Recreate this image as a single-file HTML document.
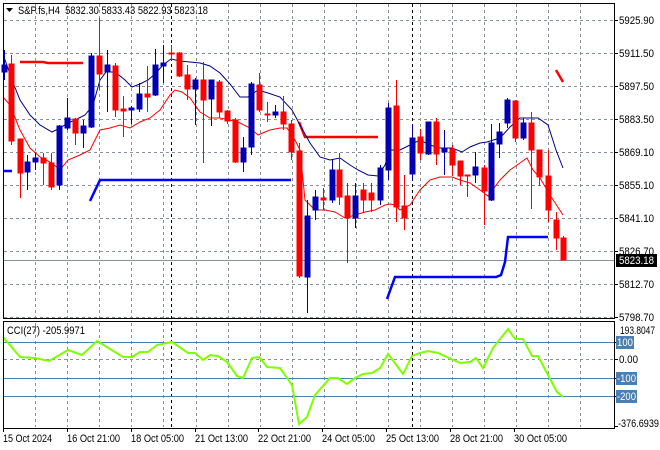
<!DOCTYPE html>
<html><head><meta charset="utf-8"><style>
body{margin:0;background:#fff;width:660px;height:450px;overflow:hidden}
svg{display:block}
text{font-family:"Liberation Sans",sans-serif;font-size:11px;fill:#000}
</style></head><body>
<svg width="660" height="450" viewBox="0 0 660 450" xmlns="http://www.w3.org/2000/svg">
<rect width="660" height="450" fill="#fff"/>
<g stroke="#8a9097" stroke-dasharray="3,3" stroke-width="1">
<path d="M4 20.5H614M4 53.5H614M4 86.5H614M4 119.5H614M4 152.5H614M4 185.5H614M4 218.5H614M4 251.5H614M4 284.5H614M4 317.5H614"/>
<path d="M35.5 4V318M67.5 4V318M99.5 4V318M131.5 4V318M163.5 4V318M196.5 4V318M228.5 4V318M260.5 4V318M292.5 4V318M324.5 4V318M356.5 4V318M388.5 4V318M420.5 4V318M452.5 4V318M484.5 4V318M516.5 4V318M548.5 4V318M580.5 4V318"/>
<path d="M35.5 323V427M67.5 323V427M99.5 323V427M131.5 323V427M163.5 323V427M196.5 323V427M228.5 323V427M260.5 323V427M292.5 323V427M324.5 323V427M356.5 323V427M388.5 323V427M420.5 323V427M452.5 323V427M484.5 323V427M516.5 323V427M548.5 323V427M580.5 323V427M4 359.5H614"/>
</g>
<g stroke="#000" stroke-dasharray="3,3"><path d="M171.5 4V428M412.5 4V428"/></g>
<path d="M4 260.5H614" stroke="#8a9097"/>
<g stroke="#4a7fb0"><path d="M4 342.5H614M4 378.5H614M4 396.5H614"/></g>
<g fill="none" stroke-width="2.5">
<path d="M20 62H43L48 63H83" stroke="#f00"/>
<path d="M299 122L305 137H378" stroke="#f00"/>
<path d="M556 70L563 82" stroke="#f00"/>
<path d="M3 171H12" stroke="#00f"/>
<path d="M90 201L100 180H291" stroke="#00f"/>
<path d="M387 299L395 277H496L501 275L505 262L508 237H548" stroke="#00f"/>
</g>
<polyline fill="none" stroke="#000080" stroke-width="1" points="4,57 12,80 20,100 30,115 40,125 52,132 60,128 68,123 75,120 85,115 93,105 100,80 106,72 115,72 125,80 132,87 140,84 148,80 155,74 163,65 171,59 180,61 190,62 200,63 210,66 220,73 230,84 240,97 248,97 258,90 268,93 280,97 292,110 300,125 310,143 320,157 330,160 340,158 350,165 358,170 368,175 378,176 385,165 390,150 400,150 410,145 420,140 430,145 440,148 452,148 462,152 470,147 480,143 487,142 500,138 510,127 520,118 530,118 538,118 548,125 556,150 563,168"/>
<polyline fill="none" stroke="#f00" stroke-width="1" points="3,97 10,105 20,130 30,148 40,157 52,163 60,170 68,160 80,155 90,150 100,130 110,128 120,125 130,128 140,122 150,118 160,110 170,95 175,90 182,92 190,98 200,112 210,118 220,118 230,120 240,123 250,128 258,135 265,132 270,130 280,128 287,128 295,140 300,150 305,200 315,210 325,210 335,212 345,218 355,215 365,212 375,210 385,205 390,204 395,205 400,210 410,205 420,190 430,180 440,177 452,177 460,180 470,183 480,190 488,196 500,180 510,170 520,163 527,158 533,170 540,178 550,195 563,215"/>
<g stroke="#0000b0" fill="#0000b0">
<path d="M4.5 50V80M27.5 155V190M35.5 153V170M59.5 125V190M67.5 98V130M83.5 120V148M91.5 53V128M107.5 50V112M131.5 106V124M139.5 83V112M155.5 49V96M163.5 45V83M195.5 78V125M211.5 80V126M243.5 137V172M251.5 82V155M275.5 105V118M307.5 200V313M315.5 190V220M332.5 159V203M355.5 183V228M380.5 165V205M388.5 103V180M412.5 124V181M428.5 122V155M444.5 130V175M475.5 152V183M491.5 124V201M499.5 123V158M507.5 98V128M523.5 118V140"/>
<rect x="2" y="65" width="5" height="7"/><rect x="25" y="162" width="5" height="10"/><rect x="33" y="158" width="5" height="4"/><rect x="57" y="126" width="5" height="59"/><rect x="65" y="118" width="5" height="10"/><rect x="81" y="126" width="5" height="7"/><rect x="89" y="56" width="5" height="71"/><rect x="105" y="65" width="5" height="7"/><rect x="129" y="108" width="5" height="2"/><rect x="137" y="94" width="5" height="15"/><rect x="153" y="65" width="5" height="30"/><rect x="161" y="63" width="5" height="3"/><rect x="193" y="80" width="5" height="9"/><rect x="209" y="80" width="5" height="19"/><rect x="241" y="148" width="5" height="14"/><rect x="249" y="84" width="5" height="63"/><rect x="273" y="112" width="5" height="3"/><rect x="305" y="216" width="5" height="61"/><rect x="313" y="197" width="5" height="13"/><rect x="330" y="170" width="5" height="30"/><rect x="353" y="196" width="5" height="22"/><rect x="378" y="168" width="5" height="32"/><rect x="386" y="108" width="5" height="62"/><rect x="410" y="138" width="5" height="36"/><rect x="426" y="122" width="5" height="32"/><rect x="442" y="148" width="5" height="4"/><rect x="473" y="167" width="5" height="8"/><rect x="489" y="143" width="5" height="57"/><rect x="497" y="132" width="5" height="12"/><rect x="505" y="100" width="5" height="23"/><rect x="521" y="123" width="5" height="15"/>
</g>
<g stroke="#f00" fill="#f00">
<path d="M11.5 55V145M20.5 139V198M43.5 153V185M51.5 153V190M75.5 118V145M99.5 18V90M115.5 63V117M123.5 96V137M147.5 66V112M171.5 45V60M179.5 52V77M187.5 65V100M203.5 62V163M219.5 80V118M227.5 110V124M235.5 118V163M259.5 73V112M267.5 102V122M283.5 96V130M291.5 120V160M299.5 143V278M323.5 188V210M339.5 153V205M347.5 183V263M363.5 183V213M371.5 183V212M396.5 80V222M404.5 175V230M420.5 129V160M436.5 118V165M452.5 145V176M460.5 161V185M467.5 175V197M484.5 165V225M515.5 100V142M531.5 112V209M539.5 150V186M548.5 150V222M556.5 212V250M563.5 236V260"/>
<rect x="9" y="64" width="5" height="77"/><rect x="18" y="139" width="5" height="34"/><rect x="41" y="158" width="5" height="5"/><rect x="49" y="163" width="5" height="24"/><rect x="73" y="119" width="5" height="14"/><rect x="97" y="56" width="5" height="18"/><rect x="113" y="66" width="5" height="44"/><rect x="121" y="109" width="5" height="2"/><rect x="145" y="94" width="5" height="3"/><rect x="169" y="53" width="5" height="1"/><rect x="177" y="53" width="5" height="23"/><rect x="185" y="75" width="5" height="14"/><rect x="201" y="80" width="5" height="20"/><rect x="217" y="82" width="5" height="30"/><rect x="225" y="111" width="5" height="10"/><rect x="233" y="120" width="5" height="42"/><rect x="257" y="85" width="5" height="25"/><rect x="265" y="114" width="5" height="1"/><rect x="281" y="112" width="5" height="12"/><rect x="289" y="124" width="5" height="28"/><rect x="297" y="151" width="5" height="125"/><rect x="321" y="198" width="5" height="2"/><rect x="337" y="170" width="5" height="27"/><rect x="345" y="196" width="5" height="22"/><rect x="361" y="190" width="5" height="10"/><rect x="369" y="193" width="5" height="7"/><rect x="394" y="106" width="5" height="101"/><rect x="402" y="206" width="5" height="12"/><rect x="418" y="137" width="5" height="16"/><rect x="434" y="122" width="5" height="32"/><rect x="450" y="149" width="5" height="16"/><rect x="458" y="161" width="5" height="15"/><rect x="465" y="175" width="5" height="1"/><rect x="482" y="168" width="5" height="23"/><rect x="513" y="101" width="5" height="37"/><rect x="529" y="123" width="5" height="27"/><rect x="537" y="150" width="5" height="27"/><rect x="546" y="176" width="5" height="34"/><rect x="554" y="220" width="5" height="18"/><rect x="561" y="238" width="5" height="22"/>
</g>
<polyline fill="none" stroke="#7fff00" stroke-width="2" points="3,337 20,357 35,358 49,361 68,350 82,355 97,341 123,357 132,357 140,352 148,352 157,345 172,342 188,353 195,353 203,360 210,355 218,356 227,362 237,376 243,378 252,358 259,357 267,367 280,368 292,385 299,424 307,417 315,395 330,378 338,378 347,384 355,378 363,374 372,373 380,368 388,354 403,374 412,356 420,353 428,351 438,353 460,363 470,362 476,358 483,368 493,348 508,329 515,339 523,339 532,356 538,356 548,375 557,392 563,397"/>
<g fill="none" stroke="#000"><rect x="3.5" y="3.5" width="611" height="315"/><rect x="3.5" y="321.5" width="611" height="107"/></g>
<g stroke="#000"><path d="M614 20.5h4M614 53.5h4M614 86.5h4M614 119.5h4M614 152.5h4M614 185.5h4M614 218.5h4M614 251.5h4M614 284.5h4M614 317.5h4M614 342.5h4M614 359.5h4M614 378.5h4M614 396.5h4M614 426.5h4M3.5 428v4M67.5 428v4M131.5 428v4M195.5 428v4M258.5 428v4M322.5 428v4M386.5 428v4M450.5 428v4M514.5 428v4"/></g>
<path d="M6 8h7l-3.5 4z" fill="#000"/>
<text x="18" y="14" textLength="190" lengthAdjust="spacingAndGlyphs">S&amp;P.fs,H4&#160;&#160;5832.30 5833.43 5822.93 5823.18</text>
<text x="7" y="334" textLength="78" lengthAdjust="spacingAndGlyphs">CCI(27) -205.9971</text>
<g>
<text x="619" y="24" textLength="35" lengthAdjust="spacingAndGlyphs">5925.90</text><text x="619" y="57" textLength="35" lengthAdjust="spacingAndGlyphs">5911.50</text><text x="619" y="90" textLength="35" lengthAdjust="spacingAndGlyphs">5897.50</text><text x="619" y="123" textLength="35" lengthAdjust="spacingAndGlyphs">5883.50</text><text x="619" y="156" textLength="35" lengthAdjust="spacingAndGlyphs">5869.10</text><text x="619" y="189" textLength="35" lengthAdjust="spacingAndGlyphs">5855.10</text><text x="619" y="222" textLength="35" lengthAdjust="spacingAndGlyphs">5841.10</text><text x="619" y="255" textLength="35" lengthAdjust="spacingAndGlyphs">5826.70</text><text x="619" y="288" textLength="35" lengthAdjust="spacingAndGlyphs">5812.70</text><text x="619" y="321" textLength="35" lengthAdjust="spacingAndGlyphs">5798.70</text>
</g>
<rect x="616" y="254" width="41" height="13" fill="#000"/><text x="619" y="264" textLength="35" lengthAdjust="spacingAndGlyphs" style="fill:#fff">5823.18</text>
<text x="620" y="334" textLength="35" lengthAdjust="spacingAndGlyphs">193.8047</text>
<rect x="616" y="336" width="18" height="13" fill="#4a7fb0"/><text x="617" y="346" textLength="16" lengthAdjust="spacingAndGlyphs" style="fill:#fff">100</text>
<text x="619" y="363" textLength="19" lengthAdjust="spacingAndGlyphs">0.00</text>
<rect x="616" y="372" width="21" height="13" fill="#4a7fb0"/><text x="617" y="382" textLength="19" lengthAdjust="spacingAndGlyphs" style="fill:#fff">-100</text>
<rect x="616" y="390" width="21" height="13" fill="#4a7fb0"/><text x="617" y="400" textLength="19" lengthAdjust="spacingAndGlyphs" style="fill:#fff">-200</text>
<text x="618" y="427" textLength="41" lengthAdjust="spacingAndGlyphs">-376.6939</text>
<g>
<text x="3" y="442" textLength="49" lengthAdjust="spacingAndGlyphs">15 Oct 2024</text><text x="67" y="442" textLength="53" lengthAdjust="spacingAndGlyphs">16 Oct 21:00</text><text x="131" y="442" textLength="53" lengthAdjust="spacingAndGlyphs">18 Oct 05:00</text><text x="195" y="442" textLength="53" lengthAdjust="spacingAndGlyphs">21 Oct 13:00</text><text x="258" y="442" textLength="53" lengthAdjust="spacingAndGlyphs">22 Oct 21:00</text><text x="322" y="442" textLength="53" lengthAdjust="spacingAndGlyphs">24 Oct 05:00</text><text x="386" y="442" textLength="53" lengthAdjust="spacingAndGlyphs">25 Oct 13:00</text><text x="450" y="442" textLength="53" lengthAdjust="spacingAndGlyphs">28 Oct 21:00</text><text x="514" y="442" textLength="53" lengthAdjust="spacingAndGlyphs">30 Oct 05:00</text>
</g>
</svg>
</body></html>
